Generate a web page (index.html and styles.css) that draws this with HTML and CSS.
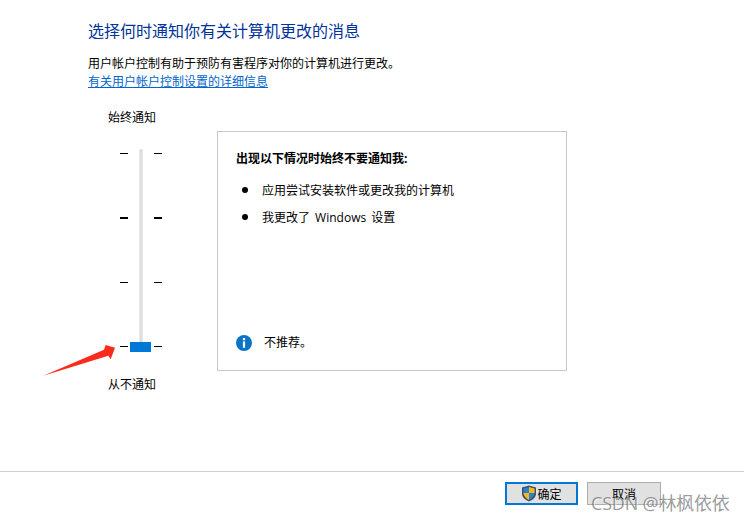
FILE: index.html
```html
<!DOCTYPE html>
<html lang="zh-CN">

<head>
    <meta charset="UTF-8">
    <title>用户帐户控制设置</title>
    <link rel="stylesheet" href="styles.css">
</head>

<body>
    <div class="content">
        <h1 class="title">选择何时通知你有关计算机更改的消息</h1>
        <p class="intro">用户帐户控制有助于预防有害程序对你的计算机进行更改。</p>
        <a href="#" class="more">有关用户帐户控制设置的详细信息</a>

        <div class="settings">
            <div class="slider-col">
                <div class="slider-label">始终通知</div>
                <div class="slider">
                    <div class="track"></div>
                    <div class="thumb"></div>
                    <div class="tick-row"><i class="tick"></i><i class="tick"></i></div>
                    <div class="tick-row"><i class="tick bold"></i><i class="tick bold"></i></div>
                    <div class="tick-row"><i class="tick"></i><i class="tick"></i></div>
                    <div class="tick-row"><i class="tick"></i><i class="tick"></i></div>
                </div>
                <div class="slider-label bottom">从不通知</div>
            </div>

            <div class="panel">
                <div class="panel-head">出现以下情况时始终不要通知我:</div>
                <ul class="panel-list">
                    <li>应用尝试安装软件或更改我的计算机</li>
                    <li>我更改了 Windows 设置</li>
                </ul>
                <div class="panel-note">
                    <svg class="info" width="16" height="16" viewBox="0 0 16 16">
                        <circle cx="8" cy="8" r="8" fill="#0b74c8"/>
                        <rect x="6.9" y="3" width="2.2" height="2.2" fill="#fff"/>
                        <rect x="6.9" y="6.4" width="2.2" height="6.4" fill="#fff"/>
                    </svg>
                    <span>不推荐。</span>
                </div>
            </div>
        </div>
    </div>

    <div class="footer">
        <button class="btn primary">
            <svg width="16" height="17" viewBox="0 0 16 17">
                <path d="M8 0.5 L15 2.5 V8.5 C15 12 12 15 8 16.5 C4 15 1 12 1 8.5 V2.5 Z" fill="#34506e"/>
                <path d="M8 2 L13.6 3.5 V8 H8 Z" fill="#f6b91d"/>
                <path d="M8 2 L2.4 3.5 V8 H8 Z" fill="#2f7fc9"/>
                <path d="M8 8 H13.6 C13.3 11 11 13.6 8 15 Z" fill="#2f7fc9"/>
                <path d="M8 8 H2.4 C2.7 11 5 13.6 8 15 Z" fill="#f6b91d"/>
            </svg>确定</button>
        <button class="btn">取消</button>
    </div>

    <svg class="arrow" width="80" height="40" viewBox="0 0 80 40">
        <path d="M1.3 35.7 L62 9.7 L63.7 5 L73 7.7 L68.7 19.3 L66.3 15.7 Z" fill="#fb2a1c"/>
    </svg>
    <div class="watermark">CSDN @林枫依依</div>
</body>

</html>
```

FILE: styles.css
```css
html,
body {
    height: 100%;
}

body {
    margin: 0;
    width: 744px;
    height: 521px;
    overflow: hidden;
    position: relative;
    display: flex;
    flex-direction: column;
    background-color: #fff;
    color: #000;
    font-family: "Open Sans", "Noto Sans CJK SC", sans-serif;
    font-size: 12px;
}

.content {
    flex: 1;
    padding: 20px 0 0 88px;
}

.title {
    margin: 0;
    font-size: 16px;
    font-weight: 400;
    line-height: 22px;
    color: #003399;
}

.intro {
    margin: 13px 0 0;
    line-height: 18px;
}

.more {
    display: inline-block;
    line-height: 16px;
    color: #0066cc;
    text-decoration: underline;
}

.settings {
    display: flex;
    margin: 19px 0 0 20px;
}

.slider-col {
    width: 48px;
}

.slider-label {
    line-height: 18px;
    white-space: nowrap;
}

.slider-label.bottom {
    margin-top: 24px;
}

.slider {
    position: relative;
    margin: 22px 0 0 12px;
    width: 42px;
    height: 203px;
    display: flex;
    flex-direction: column;
    gap: 63.3px;
    padding-top: 4px;
    box-sizing: border-box;
}

.track {
    position: absolute;
    left: 19px;
    top: 0;
    bottom: 0;
    width: 4px;
    background-color: #dcdfdf;
    border: 1px solid #e8e8e8;
    box-sizing: border-box;
}

.thumb {
    position: absolute;
    left: 10px;
    top: 193px;
    width: 21px;
    height: 10px;
    background-color: #0078d7;
}

.tick-row {
    display: flex;
    justify-content: space-between;
    height: 1px;
}

.tick {
    width: 8px;
    height: 1px;
    background-color: #000;
}

.tick.bold {
    height: 2px;
}

.panel {
    box-sizing: border-box;
    width: 350px;
    height: 240px;
    margin: 22px 0 0 61px;
    padding: 18px;
    border: 1px solid #c8c8c8;
    display: flex;
    flex-direction: column;
}

.panel-head {
    font-weight: 700;
    line-height: 18px;
}

.panel-list {
    margin: 14px 0 0;
    padding: 0 0 0 26px;
    list-style: none;
}

.panel-list li {
    position: relative;
    line-height: 18px;
    margin-bottom: 9px;
    word-spacing: 2px;
}

.panel-list li::before {
    content: "";
    position: absolute;
    left: -20px;
    top: 5px;
    width: 6px;
    height: 6px;
    border-radius: 50%;
    background-color: #000;
}

.panel-note {
    margin-top: auto;
    display: flex;
    align-items: center;
    gap: 12px;
    line-height: 18px;
}

.panel-note span {
    padding-top: 1px;
}

.footer {
    height: 50px;
    box-sizing: border-box;
    border-top: 1px solid #cfcfcf;
    display: flex;
    justify-content: flex-end;
    align-items: flex-start;
    gap: 9px;
    padding: 10px 83px 0 0;
}

.btn {
    box-sizing: border-box;
    width: 74px;
    height: 23px;
    padding: 0;
    display: flex;
    align-items: center;
    justify-content: center;
    background-color: #e1e1e1;
    border: 1px solid #adadad;
    font-family: inherit;
    font-size: 12px;
    color: #000;
}

.btn.primary {
    width: 73px;
    border: 2px solid #0078d7;
}

.arrow {
    position: absolute;
    left: 42px;
    top: 340px;
}

.watermark {
    position: absolute;
    left: 591px;
    top: 490px;
    font-size: 18px;
    line-height: 26px;
    letter-spacing: -0.2px;
    color: rgba(90, 90, 90, 0.62);
    text-shadow: 1px 1px 1px rgba(255, 255, 255, 0.7);
    white-space: nowrap;
}
```
